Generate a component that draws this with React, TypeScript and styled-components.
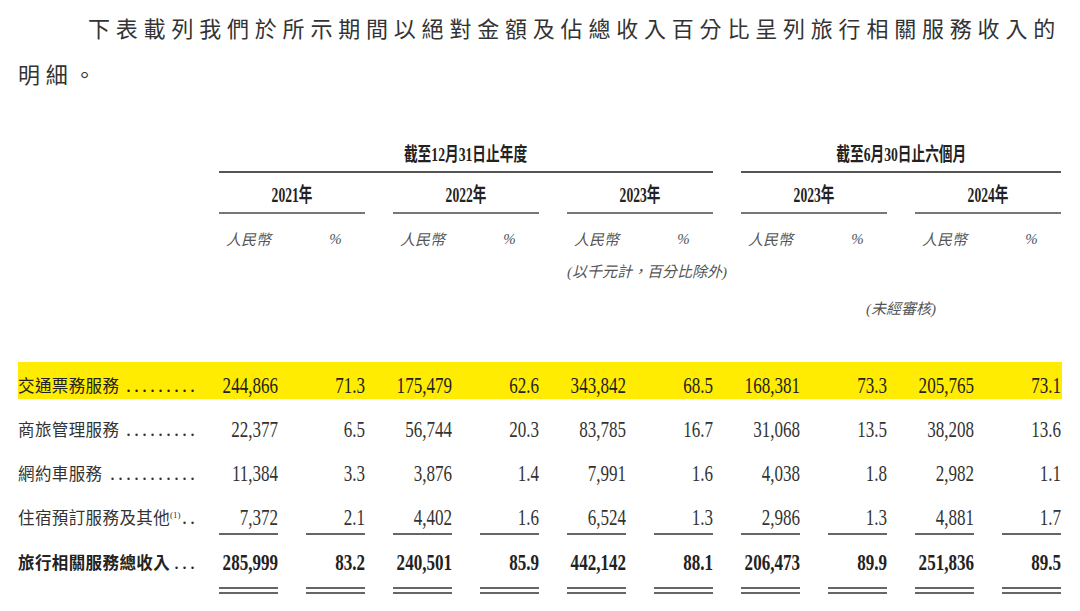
import styled, { createGlobalStyle } from "styled-components";

type Line = { label: string; note?: string; dots: number; values: string[] };

const lines: Line[] = [
  {
    label: "交通票務服務",
    dots: 9,
    values: ["244,866", "71.3", "175,479", "62.6", "343,842", "68.5", "168,381", "73.3", "205,765", "73.1"],
  },
  {
    label: "商旅管理服務",
    dots: 9,
    values: ["22,377", "6.5", "56,744", "20.3", "83,785", "16.7", "31,068", "13.5", "38,208", "13.6"],
  },
  {
    label: "網約車服務",
    dots: 11,
    values: ["11,384", "3.3", "3,876", "1.4", "7,991", "1.6", "4,038", "1.8", "2,982", "1.1"],
  },
  {
    label: "住宿預訂服務及其他",
    note: "(1)",
    dots: 2,
    values: ["7,372", "2.1", "4,402", "1.6", "6,524", "1.3", "2,986", "1.3", "4,881", "1.7"],
  },
];

const totals = ["285,999", "83.2", "240,501", "85.9", "442,142", "88.1", "206,473", "89.9", "251,836", "89.5"];

const years = ["2021年", "2022年", "2023年", "2023年", "2024年"];

export default function App(): JSX.Element {
  return (
    <>
      <GlobalStyle />
      <Page>
        <Para>
          下表載列我們於所示期間以絕對金額及佔總收入百分比呈列旅行相關服務收入的
          <br />
          明細。
        </Para>

        <Table>
          <Grid>
            <GroupHead $start={2} $span={6}>
              <Squeeze>截至12月31日止年度</Squeeze>
            </GroupHead>
            <GroupHead $start={8} $span={4}>
              <Squeeze>截至6月30日止六個月</Squeeze>
            </GroupHead>
          </Grid>

          <YearRow>
            {years.map((y, i) => (
              <YearHead key={i} $start={2 + i * 2}>
                <Squeeze>{y}</Squeeze>
              </YearHead>
            ))}
          </YearRow>

          <UnitRow>
            {years.map((_, i) => (
              <UnitPair key={i}>
                <Unit>人民幣</Unit>
                <Unit $latin>%</Unit>
              </UnitPair>
            ))}
          </UnitRow>

          <NoteRow $gap={13}>
            <Note $start={6} $span={2}>(以千元計，百分比除外)</Note>
          </NoteRow>
          <NoteRow $gap={17}>
            <Note $start={8} $span={4}>(未經審核)</Note>
          </NoteRow>

          <Body>
            {lines.map((line) => (
              <DataRow key={line.label} $highlight={line.label === "交通票務服務"}>
                <Label>
                  <span>
                    {line.label}
                    {line.note && <Sup>{line.note}</Sup>}
                  </span>
                  <Leader>{".".repeat(line.dots)}</Leader>
                </Label>
                {line.values.map((v, i) => (
                  <Value key={i}>
                    <Num>{v}</Num>
                  </Value>
                ))}
              </DataRow>
            ))}
          </Body>

          <RuleRow $gap={2}>
            {totals.map((_, i) => (
              <Rule key={i} />
            ))}
          </RuleRow>

          <TotalRow>
            <Label $bold>
              <span>旅行相關服務總收入</span>
              <Leader>...</Leader>
            </Label>
            {totals.map((v, i) => (
              <Value key={i}>
                <Num $bold>{v}</Num>
              </Value>
            ))}
          </TotalRow>

          <RuleRow $gap={11}>
            {totals.map((_, i) => (
              <Rule key={i} $double />
            ))}
          </RuleRow>
        </Table>
      </Page>
    </>
  );
}

const GlobalStyle = createGlobalStyle`
  html, body {
    margin: 0;
    padding: 0;
    background: #ffffff;
  }
  body {
    font-family: "Noto Sans CJK TC", "Liberation Serif", serif;
    color: #333;
  }
`;

const Page = styled.div`
  padding: 4px 18px 0;
  width: 1080px;
  box-sizing: border-box;
`;

const Para = styled.p`
  margin: 0;
  font-size: 22px;
  line-height: 46px;
  letter-spacing: 5.8px;
  text-indent: 70px;
  white-space: nowrap;
  color: #333;
`;

const Table = styled.div`
  margin-top: 49px;
`;

const Grid = styled.div`
  display: grid;
  grid-template-columns: 173px repeat(10, 59px);
  column-gap: 28px;
`;

const GroupHead = styled.div<{ $start: number; $span: number }>`
  grid-column: ${(p) => p.$start} / span ${(p) => p.$span};
  text-align: center;
  font-family: "Liberation Serif", "Noto Sans CJK TC", serif;
  font-weight: 700;
  font-size: 19px;
  line-height: 20px;
  padding-bottom: 6px;
  border-bottom: 2px solid #555;
  color: #222;
`;

const Squeeze = styled.span`
  display: inline-block;
  white-space: nowrap;
  transform: scaleX(0.72);
`;

const YearRow = styled(Grid)`
  margin-top: 12px;
`;

const YearHead = styled(GroupHead).attrs({ $span: 2 })`
  font-size: 20px;
  padding-bottom: 7px;
  border-bottom-color: #777;

  ${Squeeze} {
    transform: scaleX(0.68);
  }
`;

const UnitRow = styled(Grid)`
  margin-top: 15px;
`;

const UnitPair = styled.div`
  display: contents;

  &:first-child > :first-child {
    grid-column: 2;
  }
`;

const Unit = styled.div<{ $latin?: boolean }>`
  text-align: center;
  font-style: italic;
  font-family: ${(p) =>
    p.$latin ? `"Liberation Serif", serif` : `"Noto Sans CJK TC", sans-serif`};
  font-size: 15px;
  line-height: 20px;
  color: #555;
`;

const NoteRow = styled(Grid)<{ $gap: number }>`
  margin-top: ${(p) => p.$gap}px;
`;

const Note = styled.div<{ $start: number; $span: number }>`
  grid-column: ${(p) => p.$start} / span ${(p) => p.$span};
  text-align: center;
  font-family: "Liberation Serif", "Noto Sans CJK TC", serif;
  font-style: italic;
  font-size: 15px;
  line-height: 20px;
  color: #555;
  white-space: nowrap;
`;

const Body = styled.div`
  margin-top: 43px;
  display: flex;
  flex-direction: column;
  gap: 7px;
`;

const DataRow = styled(Grid)<{ $highlight?: boolean }>`
  height: 37px;
  box-sizing: border-box;
  padding-top: 9px;
  align-items: center;
  background: ${(p) => (p.$highlight ? "#ffec00" : "transparent")};
  color: ${(p) => (p.$highlight ? "#222" : "#333")};
`;

const TotalRow = styled(DataRow)`
  margin-top: 4px;
  color: #222;
`;

const Label = styled.div<{ $bold?: boolean }>`
  display: flex;
  justify-content: space-between;
  align-items: center;
  margin-right: -4px;
  font-size: 16.5px;
  line-height: 24px;
  letter-spacing: 0.4px;
  font-weight: ${(p) => (p.$bold ? 700 : 400)};
  white-space: nowrap;
`;

const Sup = styled.sup`
  font-family: "Liberation Serif", serif;
  font-size: 9px;
  letter-spacing: 0;
  line-height: 0;
  vertical-align: 6px;
`;

const Leader = styled.span`
  margin-right: -3px;
  font-family: "Liberation Serif", serif;
  font-size: 20px;
  font-weight: 400;
  letter-spacing: 3px;
`;

const Value = styled.div`
  display: flex;
  justify-content: flex-end;
`;

const Num = styled.span<{ $bold?: boolean }>`
  display: inline-block;
  white-space: nowrap;
  font-family: "Liberation Serif", serif;
  font-size: 24px;
  line-height: 24px;
  font-weight: ${(p) => (p.$bold ? 700 : 400)};
  transform: scaleX(0.71);
  transform-origin: right center;
`;

const RuleRow = styled(Grid)<{ $gap: number }>`
  margin-top: ${(p) => p.$gap}px;
`;

const Rule = styled.div<{ $double?: boolean }>`
  height: 0;
  border-top: ${(p) => (p.$double ? "7px double #666" : "2px solid #666")};

  &:first-child {
    grid-column: 2;
  }
`;
